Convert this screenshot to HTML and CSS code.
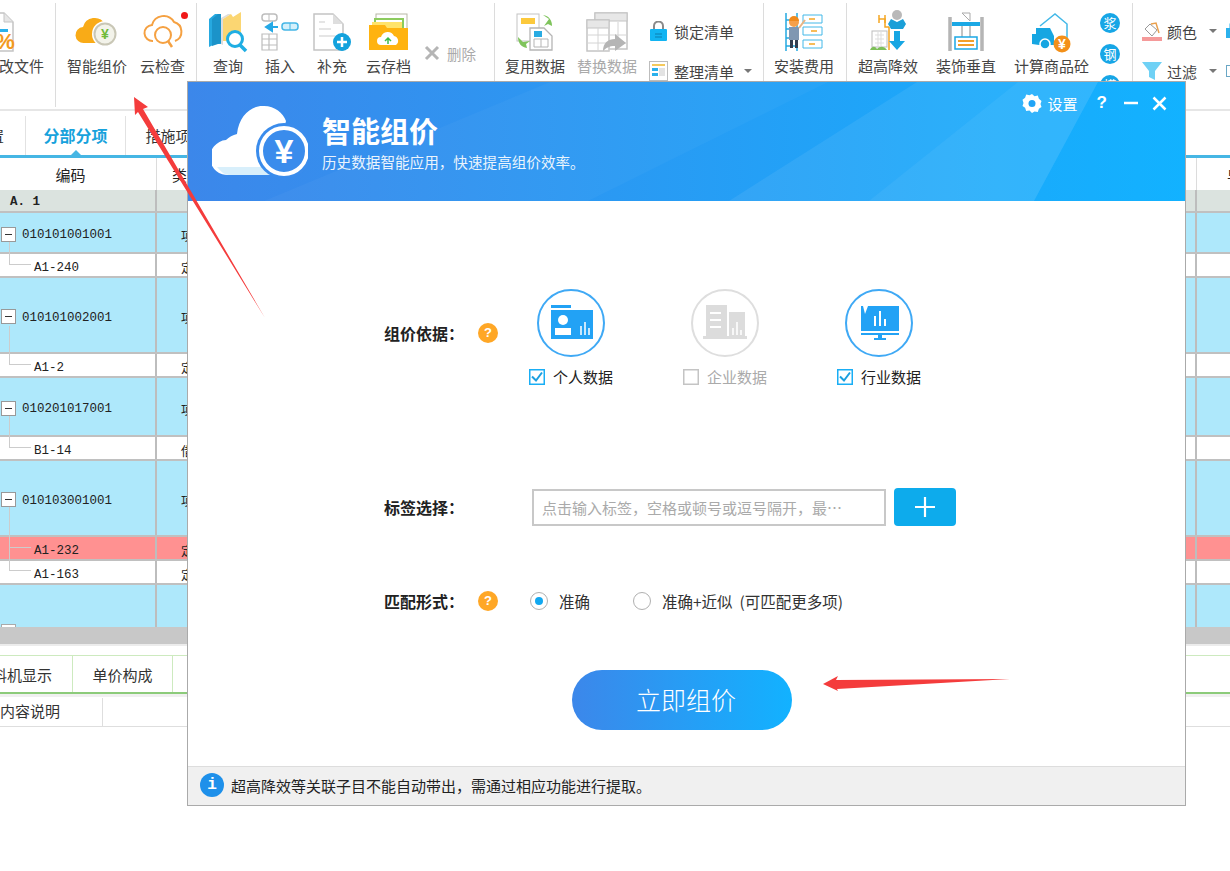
FILE: index.html
```html
<!DOCTYPE html>
<html lang="zh-CN">
<head>
    <meta charset="utf-8">
    <title>智能组价</title>
    <link rel="stylesheet" href="styles.css">
</head>
<body>
<div class="page">

    <!-- 工具栏 -->
    <div class="toolbar">
        <div class="group group-file">
            <div class="tool tool-file">
                <svg class="icon shift-left" width="40" height="40" viewBox="0 0 40 40"><path d="M2 1h26l9 9v29H2z" fill="#fff" stroke="#c4c4c4" stroke-width="1.5"/><path d="M28 1v9h9" fill="#e6e6e6" stroke="#c4c4c4"/><rect x="8" y="17" width="24" height="3" fill="#2bb1ec"/><text x="29" y="37" class="pct">%</text></svg>
                <span>修改文件</span>
            </div>
        </div>
        <div class="group group-cloud">
            <div class="tool">
                <svg class="icon" width="44" height="32" viewBox="0 0 44 32"><path d="M9 27a8 8 0 0 1-1-16 12 12 0 0 1 22-3 9 9 0 0 1 4 3v16z" fill="#f9ab17"/><circle cx="30" cy="18" r="13" fill="#fff"/><circle cx="30" cy="18" r="10.500" fill="#f3f3ea" stroke="#c9c7b6" stroke-width="2"/><text x="30" y="23" class="yen-green">¥</text></svg>
                <span>智能组价</span>
            </div>
            <div class="tool tool-dot">
                <svg class="icon" width="40" height="36" viewBox="0 0 40 36"><path d="M10 27a8 8 0 0 1-1-16 12 12 0 0 1 22-3 10 10 0 0 1 1 19" fill="none" stroke="#f5a142" stroke-width="2"/><circle cx="20" cy="21" r="8" fill="none" stroke="#f5a142" stroke-width="2"/><path d="M25 27l4 6" stroke="#f5a142" stroke-width="2.500"/></svg>
                <span>云检查</span>
                <i class="red-dot"></i>
            </div>
        </div>
        <div class="group group-edit">
            <div class="tool">
                <svg class="icon" width="40" height="40" viewBox="0 0 40 40"><path d="M1 7l6-5h6v30H7l-6 3z" fill="#26a9e0"/><path d="M4 7l6-5h3v29l-9 3z" fill="#1b93c9"/><path d="M13 6l7-4h3l-8 5v26l-2-1z" fill="#ddd"/><path d="M15 7l8-5 2 3 8-5v29H15z" fill="#fbd672"/><circle cx="27" cy="27" r="7.500" fill="#fff" stroke="#1faee3" stroke-width="3"/><path d="M32 33l6 6" stroke="#1faee3" stroke-width="3.500"/></svg>
                <span>查询</span>
            </div>
            <div class="tool">
                <svg class="icon" width="38" height="38" viewBox="0 0 38 38"><rect x="1" y="1" width="15" height="7" rx="3" fill="#fff" stroke="#bdbdbd" stroke-width="1.500"/><path d="M8 1v7" stroke="#bdbdbd"/><path d="M17 14H7M11 10l-6 4 6 4z" fill="#25a9e6" stroke="#25a9e6" stroke-width="2"/><rect x="21" y="10" width="16" height="7" rx="3" fill="#d4f0fb" stroke="#45b6e6" stroke-width="1.500"/><path d="M29 10v7" stroke="#45b6e6"/><path d="M1 21h15v16H1zM1 26h15M1 32h15M8 21v16" fill="#fff" stroke="#bdbdbd" stroke-width="1.200"/></svg>
                <span>插入</span>
            </div>
            <div class="tool">
                <svg class="icon" width="38" height="38" viewBox="0 0 38 38"><path d="M1 1h19l10 10v26H1z" fill="#fff" stroke="#c4c4c4" stroke-width="1.500"/><path d="M20 1v10h10z" fill="#dedede"/><path d="M6 9h6M6 16h12M6 23h16" stroke="#ddd" stroke-width="1.500"/><circle cx="29" cy="29" r="9" fill="#13a2dd"/><path d="M24 29h10M29 24v10" stroke="#fff" stroke-width="2.500"/></svg>
                <span>补充</span>
            </div>
            <div class="tool tool-archive">
                <svg class="icon" width="40" height="38" viewBox="0 0 40 38"><rect x="7" y="1" width="31" height="20" fill="#fff" stroke="#b7b7a5"/><rect x="5" y="5" width="30" height="16" fill="#8ccb5e"/><rect x="7" y="7" width="26" height="14" fill="#fff"/><rect x="3" y="9" width="30" height="12" fill="#ffe36a"/><path d="M0 37V12h16l2 3h21v22z" fill="#ffb30f"/><path d="M12 32a4 4 0 0 1 0-8 7 7 0 0 1 13-1 5 5 0 0 1 2 9z" fill="#fff"/><path d="M19 31v-5M16 28l3-3 3 3" fill="none" stroke="#3db94b" stroke-width="1.500"/></svg>
                <span>云存档</span>
            </div>
            <div class="tool-side muted">
                <svg width="16" height="16" viewBox="0 0 16 16"><path d="M2 2l12 12M14 2L2 14" stroke="#b5b5b5" stroke-width="3"/></svg>
                <span>删除</span>
            </div>
        </div>
        <div class="group group-data">
            <div class="tool">
                <svg class="icon" width="38" height="38" viewBox="0 0 38 38"><rect x="1" y="1" width="22" height="27" fill="#fff" stroke="#c4c4c4"/><rect x="5" y="5" width="14" height="6" fill="#fcc93c"/><path d="M14 15h14l8 8v14H14z" fill="#fff" stroke="#b5b5b5" stroke-width="1.300"/><rect x="18" y="18" width="8" height="6" fill="#29abe2"/><path d="M18 26h14v8H18zM25 26v8" fill="none" stroke="#b5b5b5"/><path d="M27 2c6 1 9 5 9 11l-4-2-4 2 5-7z" fill="#7fc45c"/><path d="M2 24c0 6 3 10 9 11l-1-4 4-3-7 1z" fill="#7fc45c"/></svg>
                <span>复用数据</span>
            </div>
            <div class="tool muted">
                <svg class="icon" width="42" height="40" viewBox="0 0 42 40"><rect x="9" y="1" width="32" height="36" fill="#fff" stroke="#c4c4c4" stroke-width="1.500"/><rect x="9" y="1" width="32" height="8" fill="#e7e7e7" stroke="#c4c4c4"/><rect x="1" y="8" width="22" height="31" fill="#fff" stroke="#c4c4c4" stroke-width="1.500"/><rect x="1" y="8" width="22" height="8" fill="#e7e7e7" stroke="#c4c4c4"/><path d="M1 23h40M1 31h40M12 16v23M23 10v29M32 10v27" stroke="#d4d4d4"/><path d="M17 39c0-8 5-12 12-12v-5l11 9-11 8v-5c-6 0-9 2-12 5z" fill="#b5b5b5"/></svg>
                <span>替换数据</span>
            </div>
            <div class="stack">
                <div class="tool-side">
                    <svg width="19" height="20" viewBox="0 0 19 20"><path d="M5 8V5a4.500 4.500 0 0 1 9 0v3" fill="none" stroke="#8a8a8a" stroke-width="2"/><rect x="1" y="8" width="17" height="12" rx="1" fill="#12b4f2"/><path d="M6 13h7M6 16h7" stroke="#0b7fb0" stroke-width="1.200"/></svg>
                    <span>锁定清单</span>
                </div>
                <div class="tool-side">
                    <svg width="19" height="20" viewBox="0 0 19 20"><rect x="0.500" y="0.500" width="18" height="19" fill="#fff" stroke="#bdbdbd"/><rect x="3" y="3" width="13" height="2" fill="#f4c95c"/><rect x="3" y="7" width="6" height="3" fill="#2bb1ec"/><rect x="3" y="12" width="6" height="3" fill="#2bb1ec"/><rect x="10" y="7" width="6" height="8" fill="#e3e3e3"/></svg>
                    <span>整理清单</span>
                    <i class="caret"></i>
                </div>
            </div>
        </div>
        <div class="group group-install">
            <div class="tool">
                <svg class="icon" width="38" height="40" viewBox="0 0 38 40"><path d="M1 1v38M12 1v38M1 8h11M1 17h11M1 26h11M1 34h11" stroke="#24a9e1" stroke-width="1.500"/><path d="M18 3h19v8H18zM18 15h19v8H18zM18 28h19v8H18z" fill="#fff" stroke="#42b8e8"/><path d="M24 7h6M26 19h6M24 32h6" stroke="#f5a623" stroke-width="1.500"/><circle cx="9" cy="10" r="5" fill="#f5a04a"/><path d="M4 9a5 5 0 0 1 10 0z" fill="#f08a1d"/><path d="M4 15h10v13H4z" fill="#7f97b2"/><path d="M5 28h3v8H5zM10 28h3v8h-3z" fill="#333f50"/><path d="M14 16l6-8" stroke="#e9b583" stroke-width="2"/></svg>
                <span>安装费用</span>
            </div>
        </div>
        <div class="group group-calc">
            <div class="tool">
                <svg class="icon" width="38" height="40" viewBox="0 0 38 40"><path d="M10 7h6v8h4M20 15v23" fill="none" stroke="#f5a623" stroke-width="1.500"/><path d="M10 3v8M16 3v8" stroke="#f5a623" stroke-width="1.500"/><rect x="3" y="19" width="15" height="16" fill="#fff" stroke="#bdbdbd"/><path d="M6 23h9M6 27h9M6 31h9M9 20v14M12 20v14" stroke="#ddd"/><path d="M1 38c2-4 5-4 7-1 3-3 7-3 10 1z" fill="#7dbf59"/><circle cx="28" cy="3" r="5" fill="#b9b9b9"/><path d="M22 7l6 3 6-3 3 5-3 5H22l-3-5z" fill="#1b9fd8"/><path d="M25 19h6v10h5l-8 9-8-9h5z" fill="#17a6e3"/></svg>
                <span>超高降效</span>
            </div>
            <div class="tool">
                <svg class="icon" width="36" height="40" viewBox="0 0 36 40"><path d="M2 5v34M34 5v34" stroke="#b5b5b5" stroke-width="3.500"/><rect x="4" y="10" width="28" height="4" fill="#1ba8e5"/><path d="M14 14v11M22 14v11" stroke="#888"/><path d="M14 1h8v8z" fill="#fff" stroke="#aaa"/><rect x="7" y="25" width="22" height="12" fill="#fff" stroke="#1ba8e5" stroke-width="1.500"/><path d="M10 29h16M10 33h16" stroke="#f2a02c" stroke-width="2"/></svg>
                <span>装饰垂直</span>
            </div>
            <div class="tool">
                <svg class="icon" width="42" height="40" viewBox="0 0 42 40"><path d="M9 14L24 2l12 10v14" fill="none" stroke="#42b8e8" stroke-width="1.500"/><path d="M1 32V22h4v-6h14l4 8v9H8" fill="#16a6e2"/><circle cx="14" cy="32" r="5" fill="#16a6e2" stroke="#fff" stroke-width="1.500"/><circle cx="31" cy="32" r="8.500" fill="#f39019"/><text x="31" y="37" class="yen-white">¥</text></svg>
                <span>计算商品砼</span>
            </div>
            <div class="badges">
                <b>浆</b>
                <b>钢</b>
                <b>模</b>
            </div>
        </div>
        <div class="group group-view">
            <div class="stack">
                <div class="tool-side">
                    <svg width="20" height="20" viewBox="0 0 20 20"><path d="M3 8l5-5 7 6-5 6z" fill="#fff" stroke="#999"/><path d="M9 3l5-1 3 10" fill="none" stroke="#e9a04e" stroke-width="1.500"/><rect x="0" y="16" width="20" height="4" fill="#f59a9a"/></svg>
                    <span>颜色</span>
                    <i class="caret"></i>
                    <svg class="tail-icon" width="18" height="18" viewBox="0 0 18 18"><rect x="0" y="6" width="14" height="10" fill="#2bb1ec"/><rect x="4" y="2" width="6" height="6" fill="none" stroke="#2bb1ec"/></svg>
                </div>
                <div class="tool-side">
                    <svg width="20" height="18" viewBox="0 0 20 18"><path d="M0 0h20l-7 9v9l-6-3V9z" fill="#6fd1f5"/></svg>
                    <span>过滤</span>
                    <i class="caret"></i>
                    <svg class="tail-icon" width="18" height="18" viewBox="0 0 18 18"><rect x="0.500" y="3.500" width="14" height="11" fill="#fff" stroke="#6aa7c5"/></svg>
                </div>
            </div>
        </div>
    </div>

    <!-- 页签 -->
    <div class="tabs">
        <div class="tab tab-first"><span>置</span></div>
        <div class="tab active">分部分项</div>
        <div class="tab">措施项目</div>
    </div>

    <!-- 表格 -->
    <div class="grid">
        <div class="row row-head"><div class="c-code">编码</div><div class="c-type">类别</div><div class="c-last">单</div></div>
        <div class="row row-group"><div class="c-code"><b>A. 1</b></div><div class="c-type"></div><div class="c-last"></div></div>
        <div class="row row-item h41"><div class="c-code"><i class="minus"></i>010101001001</div><div class="c-type">项</div><div class="c-last"></div></div>
        <div class="row row-sub line-s"><div class="c-code">A1-240</div><div class="c-type">定</div><div class="c-last"></div></div>
        <div class="row row-item h76"><div class="c-code"><i class="minus"></i>010101002001</div><div class="c-type">项</div><div class="c-last"></div></div>
        <div class="row row-sub line-m"><div class="c-code">A1-2</div><div class="c-type">定</div><div class="c-last"></div></div>
        <div class="row row-item h59"><div class="c-code"><i class="minus"></i>010201017001</div><div class="c-type">项</div><div class="c-last"></div></div>
        <div class="row row-sub line-m2"><div class="c-code">B1-14</div><div class="c-type">借</div><div class="c-last"></div></div>
        <div class="row row-item h76"><div class="c-code"><i class="minus"></i>010103001001</div><div class="c-type">项</div><div class="c-last"></div></div>
        <div class="row row-sub row-red line-l"><div class="c-code">A1-232</div><div class="c-type">定</div><div class="c-last"></div></div>
        <div class="row row-sub line-xs"><div class="c-code">A1-163</div><div class="c-type">定</div><div class="c-last"></div></div>
        <div class="row row-item row-cut"><div class="c-code"><i class="minus"></i></div><div class="c-type"></div><div class="c-last"></div></div>
    </div>

    <div class="splitter"></div>

    <!-- 下方页签 -->
    <div class="sub-tabs">
        <div class="sub-tab sub-first"><span>料机显示</span></div>
        <div class="sub-tab">单价构成</div>
    </div>
    <div class="desc-row"><div class="desc-cell">内容说明</div></div>

    <!-- 弹窗 -->
    <div class="dialog">
        <div class="dlg-head">
            <svg class="shine" width="998" height="119" viewBox="0 0 998 119"><polygon points="76,119 362,0 640,0 400,119" fill="#fff" opacity="0.03"/><polygon points="541,119 729,0 910,0 846,119" fill="#fff" opacity="0.07"/><polygon points="681,119 830,0 910,0 846,119" fill="#fff" opacity="0.05"/></svg>
            <div class="brand">
                <svg width="96" height="72" viewBox="0 0 96 72"><path d="M17 70a17 17 0 0 1-3-35 22 22 0 0 1 11-6C27 10 40 0 52 1c11 0 19 7 22 15L60 70z" fill="#fff"/><path d="M5 62c4 5 8 8 12 8h44l4-8z" fill="#d8effb"/><circle cx="72" cy="46" r="28" fill="#3a8cec"/><circle cx="72" cy="46" r="23" fill="none" stroke="#fff" stroke-width="4"/><text x="72" y="58" class="yen-brand">¥</text></svg>
                <div class="brand-text">
                    <div class="dlg-title">智能组价</div>
                    <div class="dlg-sub">历史数据智能应用，快速提高组价效率。</div>
                </div>
            </div>
            <div class="win-ctl">
                <svg width="20" height="20" viewBox="0 0 20 20"><path d="M10 1l2.500 2.200 3.300-.6 1.100 3.200 2.600 2.100-1 3.200 1 2.900-2.600 1.800-1.100 3.200-3.300-.5L10 20l-2.500-2.500-3.300.5-1.100-3.200L.5 13l1-3.100-1-3.100 2.600-2 1.100-3.200 3.300.6z" fill="#fff"/><circle cx="10" cy="10.500" r="3.500" fill="#1fa4f7"/></svg>
                <span class="ctl-text">设置</span>
                <span class="ctl-help">?</span>
                <svg class="ctl-min" width="14" height="14" viewBox="0 0 14 14"><path d="M0 7h14" stroke="#fff" stroke-width="2.500"/></svg>
                <svg class="ctl-close" width="15" height="15" viewBox="0 0 15 15"><path d="M1.500 1.500l12 12M13.500 1.500l-12 12" stroke="#fff" stroke-width="2.500"/></svg>
            </div>
        </div>

        <div class="dlg-body">
            <div class="form-row row-basis">
                <div class="form-label">组价依据：</div>
                <span class="help">?</span>
                <div class="options">
                    <div class="option">
                        <div class="ring">
                            <svg width="64" height="64" viewBox="2 2 64 64"><rect x="14" y="16" width="20" height="3" fill="#22a2f5"/><rect x="14" y="21" width="42" height="29" fill="#22a2f5"/><circle cx="26" cy="31" r="5" fill="#fff"/><rect x="18" y="39" width="16" height="7" fill="#fff"/><path d="M44 46v-9M48 46V33M52 46v-7" stroke="#fff" stroke-width="1.500"/></svg>
                        </div>
                        <label class="check-line"><svg width="16" height="16" viewBox="0 0 16 16"><rect x="0.750" y="0.750" width="14.500" height="14.500" fill="#fff" stroke="#19aef5" stroke-width="1.500"/><path d="M3 7.500l4 4 6-8" fill="none" stroke="#1a9fe0" stroke-width="2"/></svg>个人数据</label>
                    </div>
                    <div class="option off">
                        <div class="ring">
                            <svg width="64" height="64" viewBox="2 2 64 64"><rect x="15" y="16" width="21" height="31" fill="#dcdcdc"/><path d="M19 24h11M19 31h11M19 38h11" stroke="#fff" stroke-width="2"/><rect x="38" y="23" width="16" height="24" fill="#dcdcdc"/><path d="M42 46v-7M46 46V33M50 46v-5" stroke="#fff" stroke-width="1.500"/><rect x="12" y="47" width="44" height="3" fill="#dcdcdc"/></svg>
                        </div>
                        <label class="check-line"><svg width="16" height="16" viewBox="0 0 16 16"><rect x="0.750" y="0.750" width="14.500" height="14.500" fill="#fff" stroke="#c4c4c4" stroke-width="1.500"/></svg>企业数据</label>
                    </div>
                    <div class="option">
                        <div class="ring">
                            <svg width="64" height="64" viewBox="2 2 64 64"><path d="M16 17h2l2 8 3-8h31v25H16z" fill="#22a2f5"/><path d="M30 37V27M35 37V22M40 37v-7" stroke="#fff" stroke-width="2"/><rect x="16" y="44" width="38" height="2" fill="#22a2f5"/><path d="M33 46h4v3h4v2H29v-2h4z" fill="#22a2f5"/></svg>
                        </div>
                        <label class="check-line"><svg width="16" height="16" viewBox="0 0 16 16"><rect x="0.750" y="0.750" width="14.500" height="14.500" fill="#fff" stroke="#19aef5" stroke-width="1.500"/><path d="M3 7.500l4 4 6-8" fill="none" stroke="#1a9fe0" stroke-width="2"/></svg>行业数据</label>
                    </div>
                </div>
            </div>

            <div class="form-row row-tag">
                <div class="form-label tag-label">标签选择：</div>
                <input class="tag-input" type="text" placeholder="点击输入标签，空格或顿号或逗号隔开，最…">
                <button class="tag-add"><svg width="20" height="20" viewBox="0 0 20 20"><path d="M0 10h20M10 0v20" stroke="#fff" stroke-width="2.200"/></svg></button>
            </div>

            <div class="form-row row-match">
                <div class="form-label">匹配形式：</div>
                <span class="help">?</span>
                <label class="radio-line first"><i class="radio on"></i>准确</label>
                <label class="radio-line"><i class="radio"></i>准确+近似  (可匹配更多项)</label>
            </div>

            <button class="go-btn">立即组价</button>
        </div>

        <div class="dlg-foot">
            <span class="info">i</span>
            <span>超高降效等关联子目不能自动带出，需通过相应功能进行提取。</span>
        </div>
    </div>

    <!-- 红色箭头 -->
    <svg class="arrow" width="1230" height="871" viewBox="0 0 1230 871">
        <polygon points="134,97 148,107 143,109 265,318 138,112 135,115" fill="#f43c3c"/>
        <polygon points="823,684 838,676 836,680 1010,679 837,689 838,691" fill="#f43c3c"/>
    </svg>
</div>
</body>
</html>
```

FILE: styles.css
```css
* {
    box-sizing: border-box;
}
body {
    margin: 0;
    background-color: #fff;
    font-family: "Noto Sans CJK SC", "Noto Sans", sans-serif;
    color: #333;
    overflow: hidden;
}
.page {
    position: relative;
    width: 1230px;
    height: 871px;
    overflow: hidden;
}

/* 工具栏 */
.toolbar {
    display: flex;
    height: 111px;
    margin-left: -16px;
    width: 1246px;
    border-bottom: 2px solid #e6e6e6;
    overflow: hidden;
    font-size: 15px;
    color: #444;
}
.group {
    display: flex;
    height: 104px;
    margin-top: 3px;
    padding-top: 7px;
    border-right: 1px solid #dcdcdc;
    flex-shrink: 0;
}
.group-file { width: 72px; }
.group-cloud { width: 141px; padding-left: 11px; gap: 13px; }
.group-edit { width: 298px; padding-left: 16px; gap: 22px; }
.group-data { width: 269px; padding-left: 10px; gap: 12px; }
.group-install { width: 83px; padding-left: 10px; }
.group-calc { width: 286px; padding-left: 11px; gap: 18px; }
.group-view { border-right: none; padding-left: 9px; }

.tool {
    position: relative;
    display: flex;
    flex-direction: column;
    align-items: center;
    white-space: nowrap;
}
.tool-file {
    align-items: flex-start;
}
.tool-archive {
    margin-left: -3px;
}
.icon {
    height: 44px;
    margin: 0 -12px 3px;
    flex-shrink: 0;
}
.tool span {
    line-height: 18px;
}
.icon.shift-left {
    margin-left: -8px;
}
.muted {
    color: #aaa;
}
.red-dot {
    position: absolute;
    top: 2px;
    right: -3px;
    width: 7px;
    height: 7px;
    border-radius: 50%;
    background-color: #f01818;
}
.tool-side {
    display: flex;
    align-items: center;
    gap: 6px;
    height: 20px;
    white-space: nowrap;
}
.group-edit .tool-side {
    margin: 33px 0 0 -9px;
    gap: 7px;
    font-size: 14.5px;
}
.stack {
    display: flex;
    flex-direction: column;
    gap: 20px;
    padding-top: 11px;
}
.caret {
    width: 0;
    height: 0;
    margin-left: 4px;
    border-left: 4px solid transparent;
    border-right: 4px solid transparent;
    border-top: 4px solid #777;
}
.group-view .tool-side {
    gap: 5px;
}
.group-view .caret {
    margin-left: 7px;
}
.tail-icon {
    margin-left: 4px;
}
.badges {
    display: flex;
    flex-direction: column;
    gap: 11px;
    margin: 3px 0 0 -7px;
}
.badges b {
    width: 20px;
    height: 20px;
    border-radius: 50%;
    background-color: #17a6e6;
    color: #fff;
    font-size: 13px;
    font-weight: 400;
    line-height: 20px;
    text-align: center;
}
.pct {
    font: bold 22px "Liberation Sans", sans-serif;
    fill: #f29a1f;
    text-anchor: middle;
}
.yen-green {
    font: bold 14px "Liberation Sans", sans-serif;
    fill: #6fbb3a;
    text-anchor: middle;
}
.yen-white {
    font: bold 14px "Liberation Sans", sans-serif;
    fill: #fff;
    text-anchor: middle;
}
.yen-brand {
    font: bold 34px "Liberation Sans", sans-serif;
    fill: #fff;
    text-anchor: middle;
}

/* 页签 */
.tabs {
    display: flex;
    height: 47px;
    padding-top: 5px;
    border-bottom: 3px solid #46b6e4;
    font-size: 15px;
    color: #333;
}
.tab {
    position: relative;
    width: 100px;
    height: 39px;
    line-height: 39px;
    text-align: center;
    border-right: 1px solid #e2e2e2;
}
.tab-first {
    display: flex;
    justify-content: flex-end;
    width: 26px;
    padding-right: 21px;
    white-space: nowrap;
}
.tab-first span {
    flex-shrink: 0;
}
.tab.active {
    color: #17a2dc;
    font-size: 16px;
    font-weight: 700;
}
.tab.active::after {
    content: "";
    position: absolute;
    left: 45px;
    bottom: 0;
    border-left: 5px solid transparent;
    border-right: 5px solid transparent;
    border-bottom: 5px solid #46b6e4;
}

/* 表格 */
.grid {
    font: 12.5px "Liberation Mono", "Noto Sans CJK SC", monospace;
    color: #222;
}
.row {
    position: relative;
    display: flex;
    align-items: center;
    height: 24px;
    border-bottom: 2px solid #c0c0c0;
}
.c-code {
    position: relative;
    display: flex;
    flex-shrink: 0;
    align-items: center;
    width: 157px;
    height: 100%;
    padding: 5px 0 0 34px;
    border-right: 2px solid #bdbdbd;
}
.c-type {
    flex-shrink: 0;
    width: 1040px;
    height: 100%;
    display: flex;
    align-items: center;
    padding: 5px 0 0 24px;
    border-right: 2px solid #bdbdbd;
}
.c-last {
    flex-shrink: 0;
    height: 100%;
    padding-left: 30px;
}
.row-head {
    height: 32px;
    border-bottom: none;
    font: 15px "Noto Sans CJK SC", sans-serif;
}
.row-head .c-code {
    justify-content: center;
    padding: 0 15px 0 0;
    border-right: 1px solid #dcdcdc;
}
.row-head .c-type {
    padding: 0 0 0 15px;
    border-right: 1px solid #dcdcdc;
}
.row-head .c-last {
    line-height: 32px;
}
.row-group {
    height: 23px;
    background-color: #dbe3df;
}
.row-group .c-code {
    padding: 3px 0 0 10px;
}
.row-item {
    background-color: #aee8fb;
}
.row-item .c-code {
    padding-left: 22px;
}
.h41 { height: 41px; }
.h76 { height: 76px; }
.h59 { height: 59px; }
.row-cut {
    height: 42px;
    border-bottom: none;
    overflow: hidden;
}
.row-sub { z-index: 1; }
.row-red {
    background-color: #ff9191;
}
.minus {
    position: absolute;
    left: 1px;
    top: 50%;
    width: 15px;
    height: 15px;
    margin-top: -6px;
    border: 1px solid #999;
    background-color: #fff;
    z-index: 2;
}
.minus::after {
    content: "";
    position: absolute;
    left: 3px;
    right: 3px;
    top: 6px;
    height: 1px;
    background-color: #333;
}
.row-cut .minus {
    top: 39px;
    margin-top: 0;
    border-color: #aaa;
}

/* 树线 */
.row-sub::before {
    content: "";
    position: absolute;
    left: 9px;
    bottom: 11px;
    width: 21px;
    border-left: 1px solid #ccc;
    border-bottom: 1px solid #ccc;
}
.line-s::before { height: 24px; }
.line-m::before { height: 38px; }
.line-m2::before { height: 34px; }
.line-l::before { height: 48px; }
.line-xs::before { height: 40px; bottom: 12px; }

.splitter {
    height: 19px;
    background-color: #c8c8c8;
    border-bottom: 2px solid #ececec;
}

/* 下方页签 */
.sub-tabs {
    display: flex;
    height: 39px;
    margin-top: 9px;
    border-top: 1px solid #cdeabf;
    border-bottom: 2px solid #8ccb7a;
    font-size: 15px;
    color: #333;
}
.sub-tab {
    width: 100px;
    line-height: 38px;
    text-align: center;
    border-right: 1px solid #cdeabf;
}
.sub-first {
    display: flex;
    justify-content: flex-end;
    width: 73px;
    padding-right: 20px;
    white-space: nowrap;
}
.sub-first span {
    flex-shrink: 0;
}
.desc-row {
    height: 33px;
    padding-top: 1px;
    border-top: 3px solid #f0f0f0;
    border-bottom: 1px solid #dedede;
    font-size: 15px;
}
.desc-cell {
    width: 103px;
    height: 100%;
    line-height: 26px;
    border-right: 1px solid #dedede;
}

/* 弹窗 */
.dialog {
    position: absolute;
    z-index: 5;
    left: 187px;
    top: 81px;
    width: 999px;
    height: 725px;
    display: flex;
    flex-direction: column;
    background-color: #fff;
    border: 1px solid #aaa;
}
.dlg-head {
    position: relative;
    display: flex;
    justify-content: space-between;
    flex-shrink: 0;
    height: 119px;
    background: linear-gradient(90deg, #3c87ea, #12b2ff);
    color: #fff;
}
.shine {
    position: absolute;
    left: 0;
    top: 0;
}
.brand {
    position: relative;
    display: flex;
    padding: 23px 0 0 24px;
}
.brand-text {
    margin-left: 14px;
}
.dlg-title {
    font-size: 29px;
    font-weight: 700;
    line-height: 40px;
    margin-top: 5px;
}
.dlg-sub {
    font-size: 14.6px;
    line-height: 20px;
    opacity: 0.9;
    margin-top: 2px;
}
.win-ctl {
    position: relative;
    display: flex;
    align-items: center;
    height: 20px;
    margin: 11px 18px 0 0;
    font-size: 15px;
}
.ctl-text {
    margin-left: 6px;
}
.ctl-help {
    margin-left: 19px;
    font: bold 17px "Liberation Sans", sans-serif;
}
.ctl-min {
    margin-left: 17px;
}
.ctl-close {
    margin-left: 14px;
}

.dlg-body {
    flex-grow: 1;
    padding: 88px 0 0 196px;
}
.form-row {
    display: flex;
}
.form-label {
    width: 94px;
    font-size: 16px;
    font-weight: 700;
    color: #222;
    line-height: 22px;
    flex-shrink: 0;
}
.help {
    flex-shrink: 0;
    width: 20px;
    height: 20px;
    border-radius: 50%;
    background-color: #ffa726;
    color: #fff;
    font: bold 13px/20px "Liberation Sans", sans-serif;
    text-align: center;
}
.row-basis .form-label {
    margin-top: 33px;
}
.row-basis .help {
    margin-top: 34px;
}
.options {
    display: flex;
    gap: 54px;
    margin-left: 23px;
}
.option {
    display: flex;
    flex-direction: column;
    align-items: center;
    width: 100px;
}
.ring {
    width: 68px;
    height: 68px;
    border: 2px solid #3fa9f5;
    border-radius: 50%;
    display: flex;
    align-items: center;
    justify-content: center;
}
.check-line {
    display: flex;
    align-items: center;
    gap: 8px;
    margin-top: 10px;
    font-size: 15px;
    line-height: 20px;
    white-space: nowrap;
    color: #222;
}
.option.off .ring {
    border-color: #dedede;
}
.option.off .check-line {
    color: #aaa;
}
.row-tag {
    margin-top: 101px;
    align-items: center;
}
.tag-label {
    width: 148px;
}
.tag-input {
    width: 354px;
    height: 37px;
    padding: 0 8px;
    border: 2px solid #c8c8c8;
    font: 15px "Noto Sans CJK SC", sans-serif;
    outline: none;
}
.tag-input::placeholder {
    color: #aaa;
    opacity: 1;
}
.tag-add {
    display: flex;
    align-items: center;
    justify-content: center;
    width: 62px;
    height: 38px;
    margin-left: 8px;
    padding: 0;
    border: none;
    border-radius: 4px;
    background-color: #0dabec;
}
.row-match {
    align-items: center;
    margin-top: 63px;
    height: 24px;
}
.radio-line {
    display: flex;
    align-items: center;
    gap: 11px;
    font-size: 15.5px;
    white-space: pre;
    margin-left: 43px;
    color: #333;
}
.radio-line.first {
    margin-left: 32px;
}
.radio {
    position: relative;
    width: 18px;
    height: 18px;
    border: 1.500px solid #b0b0b0;
    border-radius: 50%;
    background-color: #fff;
}
.radio.on::after {
    content: "";
    position: absolute;
    left: 3.500px;
    top: 3.500px;
    width: 8px;
    height: 8px;
    border-radius: 50%;
    background-color: #12a8f0;
}
.go-btn {
    display: block;
    width: 220px;
    height: 60px;
    margin: 57px 0 0 188px;
    padding: 0 0 2px 8px;
    border: none;
    border-radius: 30px;
    background: linear-gradient(90deg, #3c87ea, #12b2ff);
    color: #fff;
    font: 300 25px "Noto Sans CJK SC", sans-serif;
}
.dlg-foot {
    display: flex;
    align-items: center;
    gap: 7px;
    flex-shrink: 0;
    height: 39px;
    padding: 0 0 2px 12px;
    background-color: #f0f0f0;
    border-top: 1px solid #ddd;
    font-size: 15px;
    color: #222;
}
.info {
    width: 24px;
    height: 24px;
    border-radius: 50%;
    background-color: #1e90ea;
    color: #fff;
    font: bold 16px/24px "Liberation Mono", monospace;
    text-align: center;
}

.arrow {
    position: absolute;
    z-index: 6;
    left: 0;
    top: 0;
    pointer-events: none;
}
```
